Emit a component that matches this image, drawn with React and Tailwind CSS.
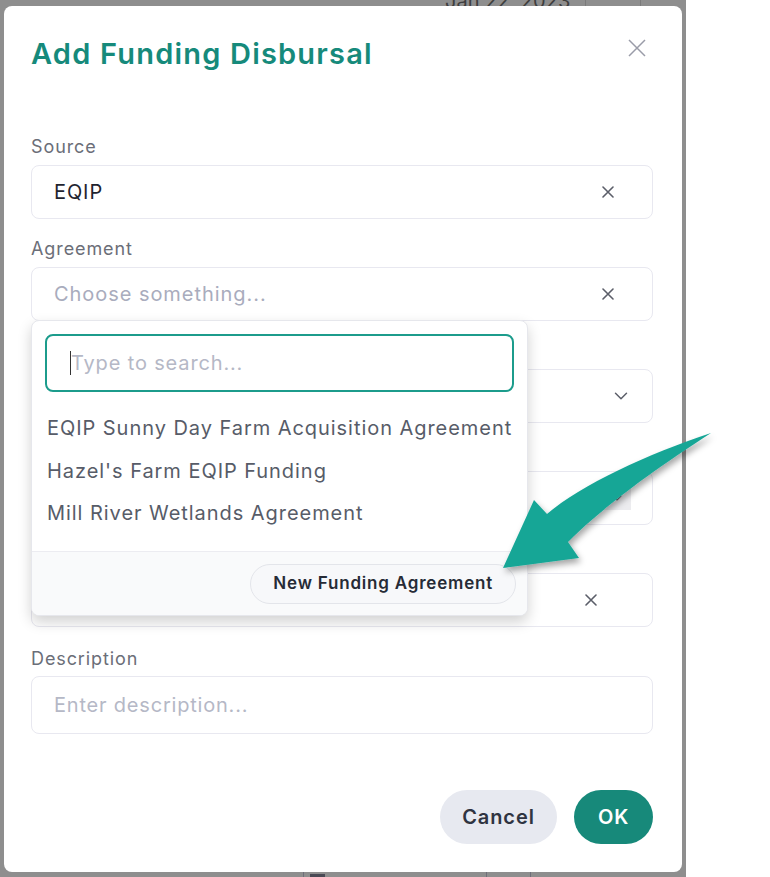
import { ChevronDown } from 'lucide-react';

const font = { fontFamily: 'Inter, "Noto Sans", sans-serif' };

function XIcon({ className = '' }) {
  return (
    <svg width="12" height="12" viewBox="0 0 12 12" className={className}>
      <path d="M1 1 L11 11 M11 1 L1 11" stroke="currentColor" strokeWidth="1.6" strokeLinecap="round" />
    </svg>
  );
}

function Label({ children }) {
  return <div className="text-[18px] leading-[24px] tracking-[0.9px] text-[#6b6e78]">{children}</div>;
}

function Box({ children, className = '' }) {
  return (
    <div className={`mt-[6px] flex h-[54px] items-center rounded-lg border border-[#e8e8f0] bg-white pl-[22px] pr-[38px] ${className}`}>
      {children}
    </div>
  );
}

function Dropdown() {
  const options = [
    'EQIP Sunny Day Farm Acquisition Agreement',
    "Hazel's Farm EQIP Funding",
    'Mill River Wetlands Agreement',
  ];
  return (
    <div className="absolute left-0 top-[83px] z-10 w-[497px] overflow-hidden rounded-lg border border-[#e6e7ec] bg-white shadow-[0_6px_14px_rgba(0,0,0,0.18)]">
      <div className="px-[13px] pt-[13px]">
        <div className="flex h-[58px] items-center rounded-lg border-2 border-[#1c9c8c] pl-[23px]">
          <span className="h-[24px] w-px bg-[#333]" />
          <span className="text-[20px] tracking-[0.85px] text-[#b5b8c6]">Type to search...</span>
        </div>
      </div>
      <div className="mt-[15px] pb-[16px]">
        {options.map((o) => (
          <div key={o} className="flex h-[42.5px] items-center pl-[15px] text-[20px] tracking-[0.95px] text-[#575c68]">
            {o}
          </div>
        ))}
      </div>
      <div className="flex h-[64px] items-center justify-end border-t border-[#ececf1] bg-[#f9fafb] pr-[11px]">
        <button className="mt-[2px] h-[40px] rounded-full border border-[#e3e5ea] bg-[#f7f8fa] px-[22px] text-[17px] font-semibold tracking-[0.8px] text-[#262b36]">
          New Funding Agreement
        </button>
      </div>
    </div>
  );
}

function Arrow() {
  return (
    <svg className="pointer-events-none absolute left-0 top-0 z-20" width="770" height="877" viewBox="0 0 770 877">
      <defs>
        <filter id="sh" x="-20%" y="-20%" width="140%" height="140%">
          <feDropShadow dx="2" dy="4" stdDeviation="3" floodColor="#000" floodOpacity="0.35" />
        </filter>
      </defs>
      <path
        d="M711 433 C 648 454 582 484 547 514 L534 500 L503 568 L579 558 L568 542 C 600 510 646 475 711 433 Z"
        fill="#17a696"
        filter="url(#sh)"
      />
    </svg>
  );
}

export default function App() {
  return (
    <div className="relative flex h-[877px] w-[770px] overflow-hidden bg-white" style={font}>
      <div className="relative h-full w-[686px] bg-[#8e8e8e]">
        {/* bits of the page behind the overlay */}
        <div className="absolute left-[445px] top-[-14px] text-[20px] text-[#3e3e3e]">Jan 22, 2023</div>
        <div className="absolute left-[585px] top-0 h-[8px] w-px bg-[#7a7a7a]" />
        <div className="absolute left-[640px] top-0 h-[8px] w-px bg-[#7a7a7a]" />
        <div className="absolute bottom-0 left-[303px] h-[5px] w-px bg-[#6f6f7a]" />
        <div className="absolute bottom-0 left-[310px] h-[3px] w-[15px] bg-[#4a4a55]" />
        <div className="absolute bottom-0 left-[486px] h-[5px] w-px bg-[#6f6f7a]" />
        <div className="absolute bottom-0 left-[530px] h-[5px] w-px bg-[#6f6f7a]" />

        <div className="relative ml-[4px] mt-[6px] flex h-[866px] w-[678px] flex-col rounded-lg bg-white pl-[27px] pr-[29px] pt-[30px]">
          <div className="flex h-[36px] items-center justify-between">
            <h1 className="text-[29px] font-semibold tracking-[1.2px] text-[#168a7b]">Add Funding Disbursal</h1>
            <svg width="18" height="18" viewBox="0 0 18 18" className="mr-[7px] mt-[-12px] text-[#9a9ca8]">
              <path d="M1 1 L17 17 M17 1 L1 17" stroke="currentColor" strokeWidth="1.5" />
            </svg>
          </div>

          <div className="mt-[63px]">
            <Label>Source</Label>
            <Box className="justify-between">
              <span className="text-[20px] tracking-[0.9px] text-[#1f2430]">EQIP</span>
              <XIcon className="text-[#5b5e69]" />
            </Box>
          </div>

          <div className="relative mt-[18px]">
            <Label>Agreement</Label>
            <Box className="justify-between">
              <span className="text-[20px] tracking-[0.95px] text-[#a9acbd]">Choose something...</span>
              <XIcon className="text-[#5b5e69]" />
            </Box>
            <Dropdown />
          </div>

          <div className="mt-[18px]">
            <Label>Program</Label>
            <Box className="justify-end !pr-[20px]">
              <ChevronDown size={22} strokeWidth={1.6} className="text-[#5b5e69]" />
            </Box>
          </div>

          <div className="mt-[18px]">
            <Label>Date</Label>
            <Box className="justify-end !pr-[21px]">
              <div className="flex h-[24px] w-[29px] items-center justify-center bg-[#ececef]">
                <ChevronDown size={16} strokeWidth={1.6} className="text-[#6b6e78]" />
              </div>
            </Box>
          </div>

          <div className="mt-[18px]">
            <Label>Amount</Label>
            <Box className="justify-end !pr-[55px]">
              <XIcon className="text-[#5b5e69]" />
            </Box>
          </div>

          <div className="mt-[20px]">
            <Label>Description</Label>
            <div className="mt-[5px] flex h-[58px] items-center rounded-lg border border-[#e8e8f0] pl-[22px]">
              <span className="text-[20px] tracking-[0.8px] text-[#b5b8c6]">Enter description...</span>
            </div>
          </div>

          <div className="mt-[56px] flex justify-end gap-[17px]">
            <button className="h-[54px] w-[117px] rounded-full bg-[#e7e9f0] text-[20px] font-semibold tracking-[0.9px] text-[#2f3441]">Cancel</button>
            <button className="h-[54px] w-[79px] rounded-full bg-[#17897a] text-[20px] font-semibold tracking-[0.9px] text-white">OK</button>
          </div>
        </div>
      </div>
      <Arrow />
    </div>
  );
}
